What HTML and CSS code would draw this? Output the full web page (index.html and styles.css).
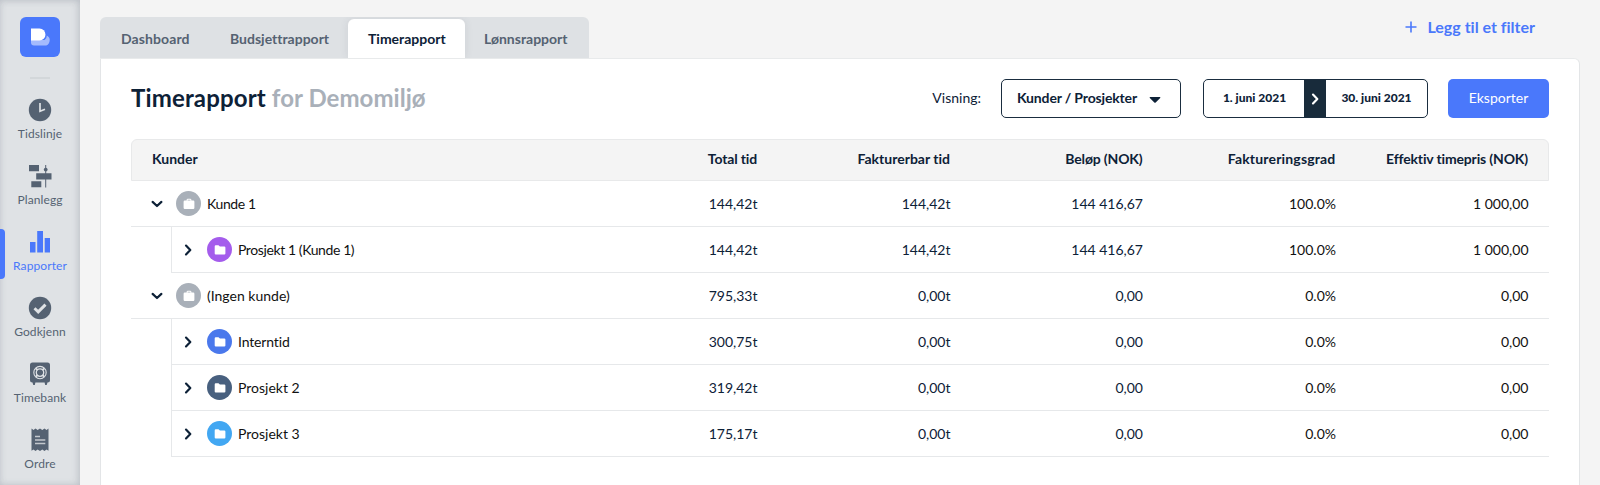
FILE: index.html
```html
<!DOCTYPE html>
<html lang="no">
<head>
<meta charset="utf-8">
<title>Timerapport</title>
<link rel="stylesheet" href="styles.css">
</head>
<body>
<svg width="0" height="0" class="defs">
  <symbol id="down" viewBox="0 0 12 12"><path d="M1.600 3.900 6 8l4.400-4.100" fill="none" stroke="currentColor" stroke-width="2.200" stroke-linecap="round" stroke-linejoin="round"/></symbol>
  <symbol id="right" viewBox="0 0 12 12"><path d="M4 1.600 8.300 6 4 10.400" fill="none" stroke="currentColor" stroke-width="2.200" stroke-linecap="round" stroke-linejoin="round"/></symbol>
  <symbol id="case" viewBox="0 0 12 12"><path d="M3.600 2.500V2a1.300 1.300 0 0 1 1.300-1.300h2.200A1.300 1.300 0 0 1 8.400 2v.5h1.800A1.200 1.200 0 0 1 11.400 3.700v6.100a1.200 1.200 0 0 1-1.200 1.200H1.800A1.200 1.200 0 0 1 .6 9.800V3.700a1.200 1.200 0 0 1 1.200-1.200zM4.600 2.500h2.800V1.700H4.600z" fill="#fff" fill-rule="evenodd"/></symbol>
  <symbol id="folder" viewBox="0 0 12 12"><path d="M1.800 1.300h2.700l1.400 1.200h4.400a1.100 1.100 0 0 1 1.100 1.100v5.900a1.100 1.100 0 0 1-1.100 1.100H1.800A1.100 1.100 0 0 1 .7 9.500V2.400a1.100 1.100 0 0 1 1.100-1.100z" fill="#fff"/></symbol>
</svg>
<div class="app">
  <nav class="sidebar">
    <svg class="logo" viewBox="0 0 40 40"><rect width="40" height="40" rx="6" fill="#4a78fb"/><path d="M11 23h13.500q2.500-1.500 2.300-4.500A5.300 5.300 0 0 1 24 28.500H14a3 3 0 0 1-3-3z" fill="#a4bbfd"/><path d="M11 11.500h8.500a5.800 5.800 0 0 1 0 11.900H11z" fill="#fff"/></svg>
    <span class="divider"></span>
    <a class="item"><svg viewBox="0 0 24 24"><circle cx="12" cy="12" r="11.200" fill="#556272"/><path d="M12 5v8.200l5-2" fill="none" stroke="#dfe2e5" stroke-width="1.700"/></svg><span>Tidslinje</span></a>
    <a class="item"><svg viewBox="0 0 24 24" fill="#556272"><path d="M1 1h10v6.200H1zM8.200 9.200h15.300v6.200H8.200zM3.300 17.200h10v6H3.300z"/><path d="M17.200 1h1v22.500h-1z"/><circle cx="17.700" cy="5.600" r="1.900"/></svg><span>Planlegg</span></a>
    <a class="item active"><svg viewBox="0 0 24 24" fill="#4a78fb"><path d="M2 12h5.500v10.500H2zM9.200 1h5.800v21.500H9.200zM16.700 8h5.300v14.500h-5.300z"/></svg><span>Rapporter</span></a>
    <a class="item"><svg viewBox="0 0 24 24"><circle cx="12" cy="12" r="11.200" fill="#556272"/><path d="m6.500 12.300 3.700 3.600 7.300-7.300" fill="none" stroke="#dfe2e5" stroke-width="2.900"/></svg><span>Godkjenn</span></a>
    <a class="item"><svg viewBox="0 0 24 24"><path d="M4.500.5h15A2.500 2.500 0 0 1 22 3v15.100a2.500 2.500 0 0 1-2.500 2.500l-.8 2.400h-1.500l-.6-2.400H7.400L6.800 23H5.300l-.8-2.400A2.500 2.500 0 0 1 2 18.100V3A2.500 2.500 0 0 1 4.500.5z" fill="#556272"/><circle cx="12" cy="10.600" r="6.200" fill="none" stroke="#dfe2e5" stroke-width="1.100"/><circle cx="12" cy="10.600" r="3.700" fill="none" stroke="#dfe2e5" stroke-width="1.300"/><path d="m7.900 6.500 1.700 1.700m4.800 4.800 1.700 1.700m0-8.200-1.700 1.700m-4.800 4.800-1.700 1.700" stroke="#dfe2e5" stroke-width="1.900"/></svg><span>Timebank</span></a>
    <a class="item"><svg viewBox="0 0 24 24"><path d="m3.500.5 2 1.500 2-1.500 2.100 1.500L12 .5 14.300 2l2.200-1.500 2 1.500 2-1.500v22.300l-2-1.300-2 1.500-2.200-1.500L12 23l-2.400-1.500L7.500 23l-2-1.500-2 1.300z" fill="#556272"/><path d="M7 8.500h5M7 12h10.300M7 15.500h10.300" stroke="#c3c8cd" stroke-width="1.300"/></svg><span>Ordre</span></a>
  </nav>
  <main class="main">
    <header class="top">
      <div class="tabs">
        <a class="tab t1"><span>Dashboard</span></a><a class="tab t2"><span>Budsjettrapport</span></a><a class="tab t3 on"><span>Timerapport</span></a><a class="tab t4"><span>Lønnsrapport</span></a>
      </div>
      <a class="filter"><svg viewBox="0 0 12 12"><path d="M6 .5v11M.5 6h11" stroke="#4a78fb" stroke-width="1.600"/></svg><span>Legg til et filter</span></a>
    </header>
    <section class="panel">
      <div class="bar">
        <h1><span class="h-a">Timerapport</span> <span class="h-b">for Demomiljø</span></h1>
        <span class="view">Visning:</span>
        <div class="select"><span>Kunder / Prosjekter</span><svg viewBox="0 0 12 6"><path d="M1.200 0h9.600q.9.200.4 1L6.700 5.500q-.7.600-1.400 0L.8 1Q.3.200 1.200 0z" fill="#0d2137"/></svg></div>
        <div class="dates"><span class="d1">1. juni 2021</span><i><svg><use href="#right"/></svg></i><span class="d2">30. juni 2021</span></div>
        <a class="export"><span>Eksporter</span></a>
      </div>
      <div class="table">
        <div class="row head"><b class="name">Kunder</b><b class="tight">Total tid</b><b>Fakturerbar tid</b><b class="tight">Beløp (NOK)</b><b class="wide">Faktureringsgrad</b><b class="tight">Effektiv timepris (NOK)</b></div>
        <div class="row"><div class="name"><svg class="chev"><use href="#down"/></svg><em class="dot grey"><svg><use href="#case"/></svg></em><span class="tighter">Kunde 1</span></div><span>144,42t</span><span>144,42t</span><span>144 416,67</span><span class="k">100.0%</span><span class="k">1 000,00</span></div>
        <div class="group">
          <div class="row"><div class="name"><svg class="chev"><use href="#right"/></svg><em class="dot purple"><svg><use href="#folder"/></svg></em><span class="tighter">Prosjekt 1 (Kunde 1)</span></div><span>144,42t</span><span>144,42t</span><span>144 416,67</span><span class="k">100.0%</span><span class="k">1 000,00</span></div>
        </div>
        <div class="row"><div class="name"><svg class="chev"><use href="#down"/></svg><em class="dot grey"><svg><use href="#case"/></svg></em><span>(Ingen kunde)</span></div><span>795,33t</span><span>0,00t</span><span>0,00</span><span class="k">0.0%</span><span class="k">0,00</span></div>
        <div class="group">
          <div class="row"><div class="name"><svg class="chev"><use href="#right"/></svg><em class="dot blue"><svg><use href="#folder"/></svg></em><span class="tight">Interntid</span></div><span>300,75t</span><span>0,00t</span><span>0,00</span><span class="k">0.0%</span><span class="k">0,00</span></div>
          <div class="row"><div class="name"><svg class="chev"><use href="#right"/></svg><em class="dot navy"><svg><use href="#folder"/></svg></em><span>Prosjekt 2</span></div><span>319,42t</span><span>0,00t</span><span>0,00</span><span class="k">0.0%</span><span class="k">0,00</span></div>
          <div class="row"><div class="name"><svg class="chev"><use href="#right"/></svg><em class="dot sky"><svg><use href="#folder"/></svg></em><span>Prosjekt 3</span></div><span>175,17t</span><span>0,00t</span><span>0,00</span><span class="k">0.0%</span><span class="k">0,00</span></div>
        </div>
      </div>
    </section>
  </main>
</div>
</body>
</html>
```
FILE: styles.css
```css
* { box-sizing: border-box; }
body { margin: 0; font-family: Lato, "Liberation Sans", sans-serif; font-size: 14px; font-variant-ligatures: none; color: #0d2137; background: #f4f4f4; overflow: hidden; }
svg { display: block; flex: none; }
.defs { position: absolute; }
.app { display: flex; height: 485px; }

.sidebar { width: 80px; flex: none; display: flex; flex-direction: column; align-items: center; padding-top: 17px; background: #dfe2e5; box-shadow: inset -2px 0 7px rgba(80, 90, 105, .18), inset 1px 1px 6px rgba(80, 90, 105, .1); overflow: hidden; }
.logo { width: 40px; height: 40px; flex: none; }
.divider { width: 20px; height: 2px; margin-top: 20px; background: #d3d7da; flex: none; }
.item { position: relative; width: 80px; height: 66px; flex: none; display: flex; flex-direction: column; align-items: center; font-size: 12px; line-height: 16px; color: #556272; }
.divider + .item { margin-top: 19px; }
.item svg { width: 24px; height: 24px; }
.item span { margin-top: 4px; white-space: nowrap; letter-spacing: .1px; }
.item.active { color: #4a78fb; }
.active::before { content: ""; position: absolute; left: 0; top: -1px; width: 5px; height: 50px; border-radius: 0 4px 4px 0; background: #4a78fb; }

.main { flex: 1; padding: 17px 20px 0; display: flex; flex-direction: column; }
.top { display: flex; justify-content: space-between; height: 41px; flex: none; }
.tabs { display: flex; background: #dee1e4; border-radius: 6px 6px 0 0; overflow: hidden; width: 489px; }
.tab { display: flex; align-items: center; font-size: 14px; font-weight: 700; color: #556272; white-space: nowrap; padding: 2px 0 0 20px; }
.t1 { width: 110px; padding-left: 21px; letter-spacing: .1px; }
.t2 { width: 138px; }
.t3 { width: 117px; }
.t4 { width: 124px; padding-left: 19px; }
.tab.on { margin-top: 2px; padding-top: 0; background: #fff; color: #0d2137; border-radius: 6px 6px 0 0; box-shadow: 0 0 9px rgba(60, 70, 90, .1); }
.filter { display: flex; gap: 10px; height: 20px; align-items: center; color: #4a78fb; font-size: 16px; font-weight: 700; margin-right: 45px; white-space: nowrap; }
.filter span { margin-top: -2px; }
.filter svg { width: 12px; height: 12px; }

.panel { flex: 1; background: #fff; border: 1px solid #e3e5e7; border-top-color: #e8eaeb; border-bottom: 0; border-radius: 0 6px 0 0; padding: 20px 30px 0; }
.bar { display: flex; align-items: center; height: 39px; white-space: nowrap; }
h1 { margin: 0 auto 0 0; padding-bottom: 2px; font-size: 24px; line-height: 28px; font-weight: 700; letter-spacing: .15px; }
.h-b { color: #a9b0b9; letter-spacing: .05px; }
.view, .bar .select span, .dates span, .export span { padding-bottom: 2px; }
.view { margin-right: 20px; }
.select { width: 180px; height: 39px; border: 1px solid #1a2d3f; border-radius: 5px; display: flex; align-items: center; justify-content: space-between; padding: 0 19px 0 15px; font-weight: 700; letter-spacing: -.15px; }
.select svg { width: 12px; height: 6px; margin-top: 2px; }
.dates { margin-left: 22px; width: 225px; height: 39px; border: 1px solid #1a2d3f; border-radius: 5px; display: flex; align-items: stretch; font-size: 12px; font-weight: 900; overflow: hidden; }
.dates span { flex: 1; display: flex; align-items: center; justify-content: center; }
.dates i { width: 22px; margin-left: -1px; background: #182b3b; color: #fff; display: flex; align-items: center; justify-content: center; }
.dates svg { width: 12px; height: 12px; }
.export { margin-left: 20px; width: 101px; height: 39px; border-radius: 5px; background: #4a78fb; color: #fff; display: flex; align-items: center; justify-content: center; }

.table { margin-top: 21px; }
.row { display: grid; grid-template-columns: 1fr 193px 193px 192.500px 193px 192.500px; height: 46px; align-items: center; padding-right: 20.500px; border-bottom: 1px solid #e6e8ea; text-align: right; white-space: nowrap; }
.row > span { padding-bottom: 1px; }
.row.head { height: 42px; background: #f4f4f4; border: 1px solid #e8e9ea; border-radius: 6px 6px 0 0; padding: 0 20px 3px; }
.head .name { text-align: left; }
.tight { letter-spacing: -.15px; }
.tighter { letter-spacing: -.4px; }
.wide { letter-spacing: .18px; }
.k { color: #111; }
.row .name { display: flex; align-items: center; color: #111; }
.head .name { color: #0d2137; }
.chev { width: 12px; height: 12px; color: #0d2137; margin: 0 13px 0 20px; }
.dot { width: 25px; height: 25px; border-radius: 50%; display: flex; align-items: center; justify-content: center; margin-right: 6px; }
.dot svg { width: 12px; height: 12px; }
.group { margin-left: 40px; border-left: 1px solid #e6e8ea; }
.group .chev { margin: 0 13px 0 10px; }
.grey { background: #a9b0b9; }
.purple { background: #a45cec; }
.blue { background: #4a78ec; }
.navy { background: #48607f; }
.sky { background: #42a7f2; }
```
